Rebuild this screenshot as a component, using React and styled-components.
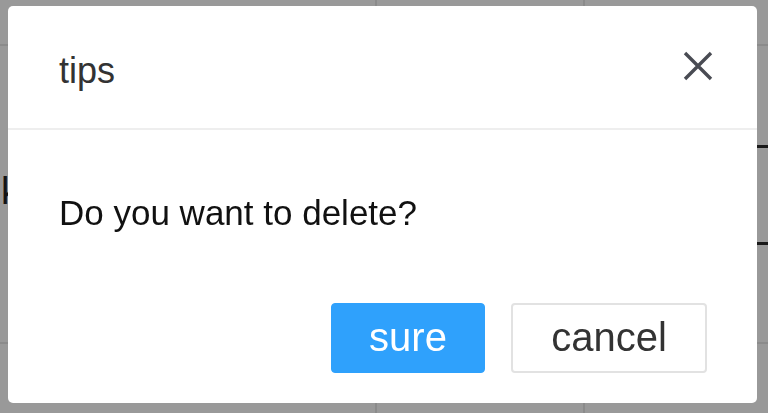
import React from "react";
import styled, { createGlobalStyle } from "styled-components";

const Global = createGlobalStyle`
  html, body { margin: 0; padding: 0; background: #fff; }
  body { font-family: "Liberation Sans", Arial, Helvetica, sans-serif; overflow: hidden; }
  * { box-sizing: border-box; }
`;

const Page = styled.div`
  width: 768px;
  height: 413px;
  background: #fff;
  display: flex;
  flex-direction: column;
`;

const Row = styled.div`
  display: grid;
  grid-template-columns: 377px 208px 1fr;
  height: ${(p) => p.$h}px;
  border-bottom: ${(p) => (p.$line ? "2px solid #e8e8e8" : "none")};
`;

const Cell = styled.div`
  border-right: ${(p) => (p.$sep ? "2px solid #e8e8e8" : "none")};
  border-bottom: ${(p) => (p.$dark ? "3px solid #2a2a2a" : "none")};
  font-size: 38px;
  color: #222;
  padding-left: 1px;
  padding-top: ${(p) => p.$pt || 0}px;
  line-height: 1;
  overflow: hidden;
`;

const Overlay = styled.div`
  position: fixed;
  inset: 0;
  background: rgba(0, 0, 0, 0.4);
  display: flex;
  align-items: flex-start;
  padding: 6px 0 0 8px;
`;

const Dialog = styled.div`
  width: 749px;
  background: #fff;
  border-radius: 5px;
  display: flex;
  flex-direction: column;
`;

const Header = styled.div`
  height: 124px;
  display: flex;
  align-items: center;
  justify-content: space-between;
  padding: 4px 44px 0 51px;
  border-bottom: 2px solid #eeeeee;
`;

const Title = styled.div`
  font-size: 36px;
  line-height: 36px;
  color: #333;
  padding-top: 4px;
`;

const CloseButton = styled.button`
  border: 0;
  background: none;
  padding: 0;
  margin-top: -6px;
  width: 30px;
  height: 30px;
  display: flex;
  cursor: pointer;
`;

const Body = styled.div`
  padding: 63px 51px 0;
  font-size: 35px;
  line-height: 40px;
  color: #111;
`;

const Footer = styled.div`
  display: flex;
  justify-content: flex-end;
  gap: 26px;
  padding: 70px 50px 30px;
`;

const Button = styled.button`
  height: 70px;
  width: ${(p) => p.$w}px;
  border-radius: 4px;
  font-family: inherit;
  font-size: 40px;
  line-height: 1;
  padding: 0 0 2px;
  cursor: pointer;
  background: ${(p) => (p.$primary ? "#2fa1fc" : "#fff")};
  color: ${(p) => (p.$primary ? "#fff" : "#333")};
  border: ${(p) => (p.$primary ? "1px solid #2fa1fc" : "2px solid #e2e2e2")};
`;

export default function App() {
  return (
    <>
      <Global />
      <Page>
        <Row $h={46} $line>
          <Cell $sep />
          <Cell $sep />
          <Cell />
        </Row>
        <Row $h={102}>
          <Cell $sep />
          <Cell $sep />
          <Cell $dark />
        </Row>
        <Row $h={97}>
          <Cell $sep $pt={24}>k</Cell>
          <Cell $sep />
          <Cell $dark />
        </Row>
        <Row $h={99} $line>
          <Cell $sep />
          <Cell $sep />
          <Cell />
        </Row>
        <Row $h={69}>
          <Cell $sep />
          <Cell $sep />
          <Cell />
        </Row>
      </Page>
      <Overlay>
        <Dialog>
          <Header>
            <Title>tips</Title>
            <CloseButton aria-label="close">
              <svg width="30" height="30" viewBox="0 0 30 30">
                <path d="M2 2 L28 28 M28 2 L2 28" stroke="#494b53" strokeWidth="3.4" fill="none" />
              </svg>
            </CloseButton>
          </Header>
          <Body>Do you want to delete?</Body>
          <Footer>
            <Button $primary $w={154}>sure</Button>
            <Button $w={196}>cancel</Button>
          </Footer>
        </Dialog>
      </Overlay>
    </>
  );
}
